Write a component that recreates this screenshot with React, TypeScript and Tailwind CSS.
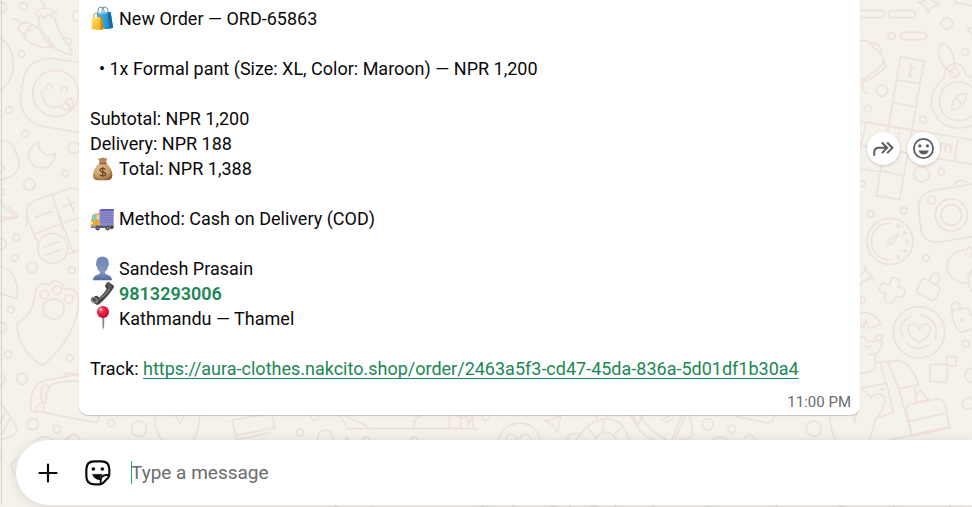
import React from 'react';

const Wallpaper = () => (
  <svg
    aria-hidden="true"
    className="absolute inset-0 w-full h-full"
    viewBox="0 0 972 507"
    preserveAspectRatio="xMinYMin slice"
    fill="none"
    stroke="#eee1db"
    strokeWidth="5"
    strokeLinecap="round"
    strokeLinejoin="round"
  >
    {/* left side, upper */}
    <g transform="scale(.33333)">
      <circle cx="6" cy="22" r="14" />
      <circle cx="71" cy="18" r="11" />
      <circle cx="236" cy="48" r="18" />
      <circle cx="65" cy="162" r="10" />
      <circle cx="27" cy="330" r="10" />
      <circle cx="75" cy="401" r="10" />
      <circle cx="222" cy="443" r="17" />
      <circle cx="195" cy="520" r="10" />
      <circle cx="88" cy="553" r="17" />
      <circle cx="4" cy="576" r="9" />
      <path d="M122 0q12 10 12 24M108 43q4-18 26-19 20 0 36 17l-16-2 2 12-14-8-10 14-8-14-10 10z" />
      <path d="M116 50C114 110 150 150 216 165 222 140 176 120 164 52M190 114q16-4 26 10-2 10-12 8" />
      <path d="M40 57q16 0 22 14M60 78q6-14 24-10l12 8-12 4 8 12-12-2-2 14-10-6C46 92 54 82 60 78zM68 104C90 140 130 146 160 140M96 74q34 12 64 66" />
      <path d="M0 114C54 150 54 236 0 272" />
      <path d="M240 187L160 176C110 172 74 200 70 240L62 290C58 340 90 370 122 378L240 398" />
      <circle cx="167" cy="280" r="69" />
      <path d="M136 266q4-16 12-14 8 2 8 14M182 272q6-14 14-11 8 4 6 14M124 274C124 334 190 330 198 300L212 322Q200 340 188 322M198 300l14-6 10 24-14 12M198 310l10 16" />
      <path d="M116 426C66 450 84 504 124 504 154 504 166 480 165 460 140 474 112 454 116 426z" />
      <path d="M0 421C24 418 44 436 46 456 66 490 66 526 0 540M0 488l16 20-16 6M0 604l54 38v10L0 662" />
      <path d="M80 680C76 620 84 610 110 600L204 566Q220 562 240 570M156 582L190 690M106 652l52-18M190 620l36-14M204 590l18 48" />
    </g>
    {/* left side, lower */}
    <g transform="translate(0 210) scale(.33333)">
      <path d="M0 22H52L0-16M80 0C84 40 104 80 118 106M102 72L240 22M172 0l48 130M108 22l50-18M204 132l36-12M220 60q10 0 16 8" />
      <circle cx="158" cy="115" r="45" />
      <path d="M130 112l50-18M136 136l50-18" />
      <circle cx="49" cy="82" r="10" />
      <circle cx="4" cy="101" r="15" />
      <circle cx="45" cy="144" r="10" />
      <circle cx="96" cy="172" r="16" />
      <circle cx="215" cy="180" r="10" />
      <circle cx="33" cy="299" r="10" />
      <circle cx="4" cy="352" r="15" />
      <circle cx="25" cy="433" r="10" />
      <circle cx="209" cy="445" r="10" />
      <circle cx="66" cy="507" r="16" />
      <path d="M0 168C42 180 58 220 50 266L0 250" />
      <path d="M50 342C96 310 100 290 106 248 108 224 130 216 148 226 160 206 184 208 194 238 220 230 240 246 236 290 220 380 170 430 130 466 90 450 54 400 50 342z" />
      <ellipse cx="161" cy="297" rx="32" ry="30" />
      <circle cx="133" cy="254" r="13" />
      <circle cx="171" cy="240" r="13" />
      <circle cx="206" cy="266" r="13" />
      <path d="M92 590C90 530 120 506 160 508L240 490M240 514Q170 510 146 530 136 574 130 600M92 590q4 20 24 14l170 34q12-4 12-24M190 498q14-18 46 0M122 540q10-22 26-10M124 546q-6 30 14 32M108 600q0-20 26-22" />
      <path d="M134 550l2 2M146 540l2 2M136 565l4-4M0 500q20-8 14 10L0 534M0 580Q50 640 50 660 50 680 0 688M0 640l18-40M4 676l26-52" />
      <circle cx="98" cy="643" r="17" />
      <circle cx="171" cy="657" r="11" />
      <path d="M0 728q12 8 0 16M46 750q-20 10-4 40M110 690q30-20 48 0M196 690q24-30 46 0" />
    </g>
    {/* right side, upper */}
    <g transform="translate(760 0) scale(.33333)">
      <rect x="270" y="31" width="102" height="22" rx="11" />
      <rect x="386" y="31" width="80" height="22" rx="11" />
      <rect x="421" y="97" width="79" height="22" rx="11" />
      <circle cx="395" cy="108" r="11" />
      <circle cx="561" cy="70" r="17" />
      <circle cx="615" cy="155" r="10" />
      <circle cx="366" cy="272" r="17" />
      <circle cx="323" cy="326" r="10" />
      <circle cx="489" cy="359" r="10" />
      <circle cx="485" cy="523" r="23" />
      <circle cx="544" cy="515" r="10" />
      <circle cx="304" cy="551" r="10" />
      <circle cx="431" cy="632" r="10" />
      <circle cx="332" cy="642" r="10" />
      <path d="M474 6Q498 6 500-10M474 6Q498 14 504 40 512 16 540 12 514 6 512-10M582 0q2 10 18 10l40 8M640 82q-30 4-8 16l8 8" />
      <path d="M290 130q20-20 40 0l36 36q12 18-4 34L300 246M334 126q28 4 28 28M368 186q16 6 2 22-26 24-56 34-16 26 8 40" />
      <path d="M422 170l70 13-73 416-70-12zM413 240l68 11M401 309l68 12M388 380l70 11M363 512l68 16M375 440l62 18" />
      <path d="M290 362L640 420M290 434l350 60M290 506l72 10M318 370l-16 74M594 420l-12 64" />
      <path d="M582 219C540 206 520 140 548 132 570 130 584 170 584 206" />
      <circle cx="583" cy="219" r="13" />
      <path d="M552 236C550 180 614 176 616 224L640 234M552 236C480 290 520 384 596 384 614 384 630 380 640 374" />
      <circle cx="596" cy="304" r="58" />
      <path d="M575 330Q574 284 619 280 620 322 575 330zM587 292l22 24" />
      <path d="M484 680Q470 620 480 600 490 574 526 570L640 552M580 554q22-22 46-6" />
      <circle cx="515" cy="600" r="12" />
      <circle cx="574" cy="645" r="48" />
      <circle cx="574" cy="645" r="31" />
      <g fill="#eee1db" stroke="none" fontFamily="Lato, sans-serif" fontSize="64">
        <text x="438" y="230" transform="rotate(9 438 230)">t</text>
        <text x="532" y="454" fontSize="54" transform="rotate(9 532 454)">m</text>
        <text x="402" y="442" transform="rotate(9 402 442)">i</text>
      </g>
    </g>
    {/* right side, lower */}
    <g transform="translate(850 200) scale(.33333)">
      <path d="M205 0Q208 60 214 98 224 128 270 126L366 110" />
      <circle cx="62" cy="43" r="10" />
      <circle cx="161" cy="32" r="10" />
      <circle cx="228" cy="174" r="10" />
      <circle cx="36" cy="299" r="10" />
      <circle cx="347" cy="431" r="10" />
      <circle cx="366" cy="526" r="21" />
      <circle cx="354" cy="611" r="17" />
      <circle cx="120" cy="124" r="69" />
      <path d="M120 69C46 70 46 178 120 180M114 128q4-10 30-26-10 26-24 32-8 0-6-6z" />
      <g fill="#eee1db" stroke="none">
        <circle cx="145" cy="77" r="6" />
        <circle cx="165" cy="98" r="6" />
        <circle cx="172" cy="125" r="6" />
        <circle cx="165" cy="152" r="6" />
        <circle cx="145" cy="171" r="6" />
        <circle cx="337" cy="360" r="7" />
      </g>
      <path d="M366 146l-10-6-6 10C300 150 280 190 298 224 310 240 340 252 356 250M366 210q-24 30 0 62M346 168l4-8M360 172l6-10" />
      <path d="M122 240q4-10 14-6l8 3q6 4 4 10l-4 14 14 4q10 4 6 12l-4 10q-4 6-12 4l-10-2-6 14q-4 10-14 6l-10-4q-6-4-4-10l4-14-14-4q-8-2-6-10l4-12q4-8 12-4l14 4z" />
      <path d="M226 236l40 24q8 6 2 14l-12 22q-6 8-14 4l-36-20q-8-6-4-14l12-24q4-8 12-6zM240 240q4-24 20-20 14 6 8 20l-8 14" />
      <path d="M310 334q-14-20 4-28 14-2 18 18M306 340q-4-8 6-10l34-6q8 0 12 8l10 20M306 340q0 20 18 50 4 8 14 6l30-10" />
      <circle cx="207" cy="397" r="77" />
      <path d="M207 428C160 400 170 372 188 372q16 0 19 16 4-16 20-16c18 0 26 30-20 56zM184 348q-46 22-26 60M212 344q58 14 44 76M168 430q34 28 70 4" />
      <path d="M240 494l52-2-2 54-50-2zM290 470l30 0-2 28-28 0z" />
      <path d="M30 228Q46 220 46 196 50 222 70 234 44 236 30 256M30 336Q76 336 92 372L64 384 54 382 48 360Q40 374 42 384L30 376M30 414q16-12 18 10h24q2-20 26-20 6 16-24 20M46 436q8 10 18 2M94 412q6 40-18 52 0 30-4 40-6 12-42 16M58 464q8 0 16-4" />
      <path d="M78 488l68-6Q184 490 206 554L146 566 114 490M92 492l14 56M146 566l40 144M34 564l76-14 20 88-54 16M34 564q20 20 28 30 14-20 36-8 20 20-20 70-10 30-18 60M30 598q-10 40-16 70l-6-30" />
      <circle cx="98" cy="568" r="3" />
      <path d="M194 564l4 44 40-10q-24-16-24-28-10 6-18 18M170 632q-4-14 14-20l74-14q24-4 28 20l14 66-114 24zM176 664l112-24M120 720l180-40" />
    </g>
    {/* strip under the message */}
    <g transform="translate(0 400) scale(.33333)">
      <circle cx="333" cy="69" r="11" />
      <circle cx="417" cy="86" r="23" />
      <circle cx="901" cy="98" r="10" />
      <circle cx="944" cy="50" r="11" />
      <path d="M464 40q0 60 26 84M524 40l16 32 14-32M600 40q-4 60-22 84M696 60l120-20 8 44-116 22zM696 60l14 60M690 124l120-26M200 124q20-40 44 0" />
    </g>
    <g transform="translate(300 400) scale(.33333)">
      <circle cx="76" cy="113" r="23" />
      <circle cx="0" cy="98" r="11" />
      <circle cx="558" cy="50" r="11" />
      <circle cx="198" cy="122" r="10" />
      <circle cx="342" cy="122" r="10" />
      <path d="M110 45q20 6 30 41h394M134 45q10 12 46 22 14 4 28 19M342 84q-4-30 28-39M448 45v40M482 45v40M470 45q12 20 30 0l6 30 12-30 2 40M134 124l6-14 6 14" />
      <path d="M594 122C614 50 710 54 720 122M734 62q30-2 50-18-6 24-12 54-12-28-38-36zM804 120q-4-26 34-18M830 120Q870 56 924 56 974 60 986 120M866 88l20 22M912 58l-4 36M966 78l-24 26M886 118q30-44 62 0M890 45v14M922 45v10M990 45q30 60 70 74M1000 50l14 26 14-32" />
      <circle cx="634" cy="118" r="16" />
      <circle cx="676" cy="118" r="16" />
      <path d="M104 318q20 4 40 24M196 330q20-16 40 0M534 330q10-16 30-14M640 316v12M744 324l28-10M810 314v10M860 330q14-16 30-12M946 316v12" />
    </g>
    <g transform="translate(640 350) scale(.33333)">
      <circle cx="203" cy="223" r="17" />
      <circle cx="275" cy="236" r="11" />
      <circle cx="522" cy="236" r="23" />
      <path d="M0 190Q20 240 80 270M126 196L96 270M138 194L104 270M148 196q10 40 8 60-12 14-40 14M290 200l90 18q20 4 24-22M66 210l20-10M76 218l22-12M218 270q20-20 44 0M568 196q4 50 20 74M310 270q20-30 36 0" />
      <path d="M40 468v8M200 468l20 6M410 468v6M600 468l16 6M760 468l12 8M930 468v8" />
    </g>
  </svg>
);

const BagsIcon = () => (
  <svg aria-hidden="true" className="w-6 h-[25px] shrink-0" viewBox="36 18 72 75">
    <defs>
      <linearGradient id="blueBag" x1="0" x2="1">
        <stop offset="0" stopColor="#55bce6" />
        <stop offset=".6" stopColor="#2a98cf" />
        <stop offset="1" stopColor="#1673ad" />
      </linearGradient>
      <linearGradient id="yellowBag" x1="0" x2="1" y2="1">
        <stop offset="0" stopColor="#ffdf63" />
        <stop offset="1" stopColor="#f0a80e" />
      </linearGradient>
    </defs>
    <path d="M60 44V30q1-9 9-9 8 1 9 9v12M72 38V28q2-7 9-7 8 1 9 10v10" fill="none" stroke="#5f91ad" strokeWidth="3" />
    <path d="M56 39l42-3 7 47-18 5-28-4z" fill="url(#blueBag)" />
    <path d="M90 37l8-1 7 47-11 3z" fill="#176ba2" />
    <path d="M62 41l26-2" stroke="#a6e2f6" strokeWidth="2" />
    <path d="M48 57V45q1-6 7-6 6 1 7 6v12" fill="none" stroke="#a97c24" strokeWidth="2.5" />
    <path d="M42 53l29-2 5 36-8 3-27-2z" fill="url(#yellowBag)" />
    <path d="M67 51l5 0 4 36-8 3z" fill="#cf890b" />
    <path d="M44 56l22-1" stroke="#fff2a6" strokeWidth="2" />
  </svg>
);

const MoneyIcon = () => (
  <svg aria-hidden="true" className="w-6 h-[25px] shrink-0" viewBox="36 48 72 75">
    <defs>
      <radialGradient id="sack" cx=".4" cy=".35" r=".7">
        <stop offset="0" stopColor="#e3c08f" />
        <stop offset=".6" stopColor="#c99e69" />
        <stop offset="1" stopColor="#8c6139" />
      </radialGradient>
    </defs>
    <path d="M60 54q6 3 10 0 6-3 10 1 5 1 8-1-2 9-7 16H68q-6-8-8-16z" fill="#b38856" />
    <path d="M66 70h17c12 8 20 22 20 36 0 10-5 15-14 15H59c-9 0-14-6-14-14 0-15 9-29 21-37z" fill="url(#sack)" />
    <path d="M64 69q10 4 21 0" fill="none" stroke="#8a5c33" strokeWidth="4" strokeLinecap="round" />
    <path d="M83 89c-5-6-17-5-17 1 0 8 17 4 17 12 0 7-13 8-18 2M74 81v29" fill="none" stroke="#6b4320" strokeWidth="4" />
  </svg>
);

const TruckIcon = () => (
  <svg aria-hidden="true" className="w-6 h-[25px] shrink-0" viewBox="36 198 72 75">
    <path d="M39 255h68v9H39z" fill="#515967" />
    <path d="M64 210l6-3h37v50H64z" fill="#8a88c8" />
    <path d="M70 207h38l-1 5H66z" fill="#5d5aa6" />
    <path d="M68 219h38M68 226h38M68 233h38M68 240h38M68 247h38" stroke="#7371b9" strokeWidth="2" />
    <path d="M40 238q2-16 10-17l14-1v37H39v-14z" fill="#f3a12b" />
    <path d="M44 225h10l-1 14-12 4z" fill="#6ed2dd" />
    <path d="M56 225h7v13h-7z" fill="#b6e8e6" />
    <path d="M39 246h6v7h-6z" fill="#fff0a1" />
    <path d="M38 256h22v6H38z" fill="#9ba4ab" />
    <g fill="#34383e" stroke="#697178" strokeWidth="2">
      <circle cx="59" cy="264" r="6.5" />
      <circle cx="89" cy="264" r="6.5" />
      <circle cx="101" cy="262" r="5" />
    </g>
    <circle cx="59" cy="264" r="2.5" fill="#ccd2d4" />
    <circle cx="89" cy="264" r="2.5" fill="#ccd2d4" />
  </svg>
);

const PersonIcon = () => (
  <svg aria-hidden="true" className="w-6 h-[25px] shrink-0" viewBox="36 48 72 75">
    <defs>
      <linearGradient id="bust" y2="1" x2="0">
        <stop offset="0" stopColor="#6d86b4" />
        <stop offset=".65" stopColor="#8498c1" />
        <stop offset="1" stopColor="#506a9c" />
      </linearGradient>
    </defs>
    <path d="M73 50c13 0 20 8 19 20 1 1 1 8-2 10-1 8-5 12-9 15v5c2 5 21 4 21 21H45c0-17 19-16 21-21v-5c-5-3-8-8-9-15-4-2-4-9-2-10-1-12 5-20 18-20z" fill="url(#bust)" />
  </svg>
);

const PhoneIcon = () => (
  <svg aria-hidden="true" className="w-6 h-[25px] shrink-0" viewBox="36 123 72 75">
    <path d="M88 127q4-2 8 2l10 7q4 5-1 10-14 22-40 45-7 6-12 2l-12-8q-6-6 1-10l10-7q6-2 9 3 2 2 5-1 11-9 19-21 2-3-1-6-5-4-2-8z" fill="#444" />
    <path d="M90 130q10 12 0 24-12 16-27 23" fill="none" stroke="#7d7d7d" strokeWidth="5" />
    <path d="M85 131l7-3 11 9-4 7-7 3z" fill="#595959" />
    <ellipse cx="50" cy="180" rx="12" ry="8" transform="rotate(32 50 180)" fill="#858585" />
    <ellipse cx="49" cy="179" rx="7" ry="4" transform="rotate(32 49 179)" fill="#4b4b4b" />
  </svg>
);

const PinIcon = () => (
  <svg aria-hidden="true" className="w-6 h-[25px] shrink-0" viewBox="36 198 72 75">
    <defs>
      <radialGradient id="pinHead" cx=".37" cy=".33" r=".7">
        <stop offset="0" stopColor="#ff758b" />
        <stop offset=".35" stopColor="#f5274c" />
        <stop offset="1" stopColor="#b9052b" />
      </radialGradient>
    </defs>
    <path d="M72 230h7l-1 31-3 10-2-10z" fill="#9ca8b0" />
    <path d="M77 232v30" stroke="#65747d" strokeWidth="2" />
    <circle cx="75" cy="216" r="18" fill="url(#pinHead)" />
    <ellipse cx="68" cy="208" rx="5" ry="3.5" transform="rotate(-35 68 208)" fill="#ffc4ce" />
  </svg>
);

const Line = ({ icon, children }: { icon?: React.ReactNode; children?: React.ReactNode }) => (
  <div className="flex items-center gap-[5px] h-[25px] whitespace-pre">
    {icon}
    <span>{children}</span>
  </div>
);

const Message = () => (
  <div className="flex-1 rounded-b-[9px] bg-white shadow-[0_1px_1px_rgba(11,20,26,0.2)] pt-1.5 pl-[11px] pr-[9px] pb-[3px]">
    <div className="text-[18px] leading-[25px] text-[#0a0a0a]">
      <Line icon={<BagsIcon />}>New Order — ORD-65863</Line>
      <Line />
      <Line>{'  • 1x Formal pant (Size: XL, Color: Maroon) — NPR 1,200'}</Line>
      <Line />
      <Line>Subtotal: NPR 1,200</Line>
      <Line>Delivery: NPR 188</Line>
      <Line icon={<MoneyIcon />}>Total: NPR 1,388</Line>
      <Line />
      <Line icon={<TruckIcon />}>Method: Cash on Delivery (COD)</Line>
      <Line />
      <Line icon={<PersonIcon />}>Sandesh Prasain</Line>
      <Line icon={<PhoneIcon />}>
        <a href="tel:9813293006" className="font-semibold text-[#1b8755]">9813293006</a>
      </Line>
      <Line icon={<PinIcon />}>Kathmandu — Thamel</Line>
      <Line />
      <Line>
        Track:{' '}
        <a
          href="https://aura-clothes.nakcito.shop/order/2463a5f3-cd47-45da-836a-5d01df1b30a4"
          className="text-[#1b8755] underline decoration-1 underline-offset-[3px] [text-decoration-skip-ink:none]"
        >
          https://aura-clothes.nakcito.shop/order/2463a5f3-cd47-45da-836a-5d01df1b30a4
        </a>
      </Line>
    </div>
    <div className="pt-[11px] text-right text-[15px] leading-5 text-[#6b6b6b]">11:00 PM</div>
  </div>
);

const actionClass = 'w-[33px] h-[33px] rounded-full bg-white shadow-[0_1px_3px_rgba(11,20,26,0.18)]';

const MessageActions = () => (
  <div className="flex gap-[7px] pt-33">
    <button aria-label="Forward" className={actionClass}>
      <svg viewBox="320 395 100 100" className="w-full h-full" fill="none" stroke="#5b5c5d" strokeWidth="6">
        <path d="M342 467v-10q0-14 14-14h26M365 427l16 16-16 16M381 427l16 16-16 16" />
      </svg>
    </button>
    <button aria-label="React" className={actionClass}>
      <svg viewBox="440 395 100 100" className="w-full h-full">
        <circle cx="490" cy="445" r="29" fill="none" stroke="#5b5c5d" strokeWidth="5.5" />
        <circle cx="479" cy="437" r="5" fill="#5b5c5d" />
        <circle cx="502" cy="437" r="5" fill="#5b5c5d" />
        <path d="M475 451h31q-4 12-15.500 12T475 451z" fill="#5b5c5d" />
      </svg>
    </button>
  </div>
);

const Composer = () => (
  <div className="mt-[25px] ml-3.5 mb-0.5 h-[65px] flex items-center gap-2.5 pl-3 rounded-l-full bg-white shadow-[0_1px_12px_rgba(11,20,26,0.12)]">
    <button aria-label="Attach" className="w-10 h-10 flex items-center justify-center">
      <svg viewBox="0 0 24 24" className="w-6 h-6" stroke="#0a0a0a" strokeWidth="2.2" strokeLinecap="round">
        <path d="M12 3.500v17M3.500 12h17" />
      </svg>
    </button>
    <button aria-label="Stickers" className="w-10 h-10 flex items-center justify-center">
      <svg viewBox="252 177 84 84" className="w-7 h-7" fill="none" stroke="#0a0a0a" strokeWidth="6.500" strokeLinejoin="round">
        <path d="M283 184h21q24 0 24 24v15q0 7-5 12l-13 13q-5 5-12 5h-15q-24 0-24-24v-21q0-24 24-24z" />
        <path d="M327 225h-7q-18 0-18 18v8" strokeWidth="5.500" />
        <path d="M277 223h30q-7 6-7 17-17-1-23-17z" fill="#0a0a0a" strokeWidth="1" />
        <circle cx="280" cy="207" r="5.500" fill="#0a0a0a" stroke="none" />
        <circle cx="307" cy="207" r="5.500" fill="#0a0a0a" stroke="none" />
      </svg>
    </button>
    <div className="flex-1 flex items-center pl-[3px]">
      <span className="w-px h-[23px] -mr-px bg-[#1daa61]" />
      <input
        type="text"
        aria-label="Type a message"
        placeholder="Type a message"
        className="flex-1 h-10 bg-transparent text-[19px] text-[#0a0a0a] placeholder:text-[#6b6b6b] outline-none"
      />
    </div>
  </div>
);

const App = () => {
  return (
    <div className="relative min-h-screen overflow-hidden bg-[#f5f1eb] pl-px font-[Roboto,sans-serif]">
      <Wallpaper />
      <main className="relative border-l border-[#d0d2cd]">
        <div className="flex items-start pl-[77px] pr-8 gap-[7px]">
          <Message />
          <MessageActions />
        </div>
        <Composer />
      </main>
    </div>
  );
};

export default App;
